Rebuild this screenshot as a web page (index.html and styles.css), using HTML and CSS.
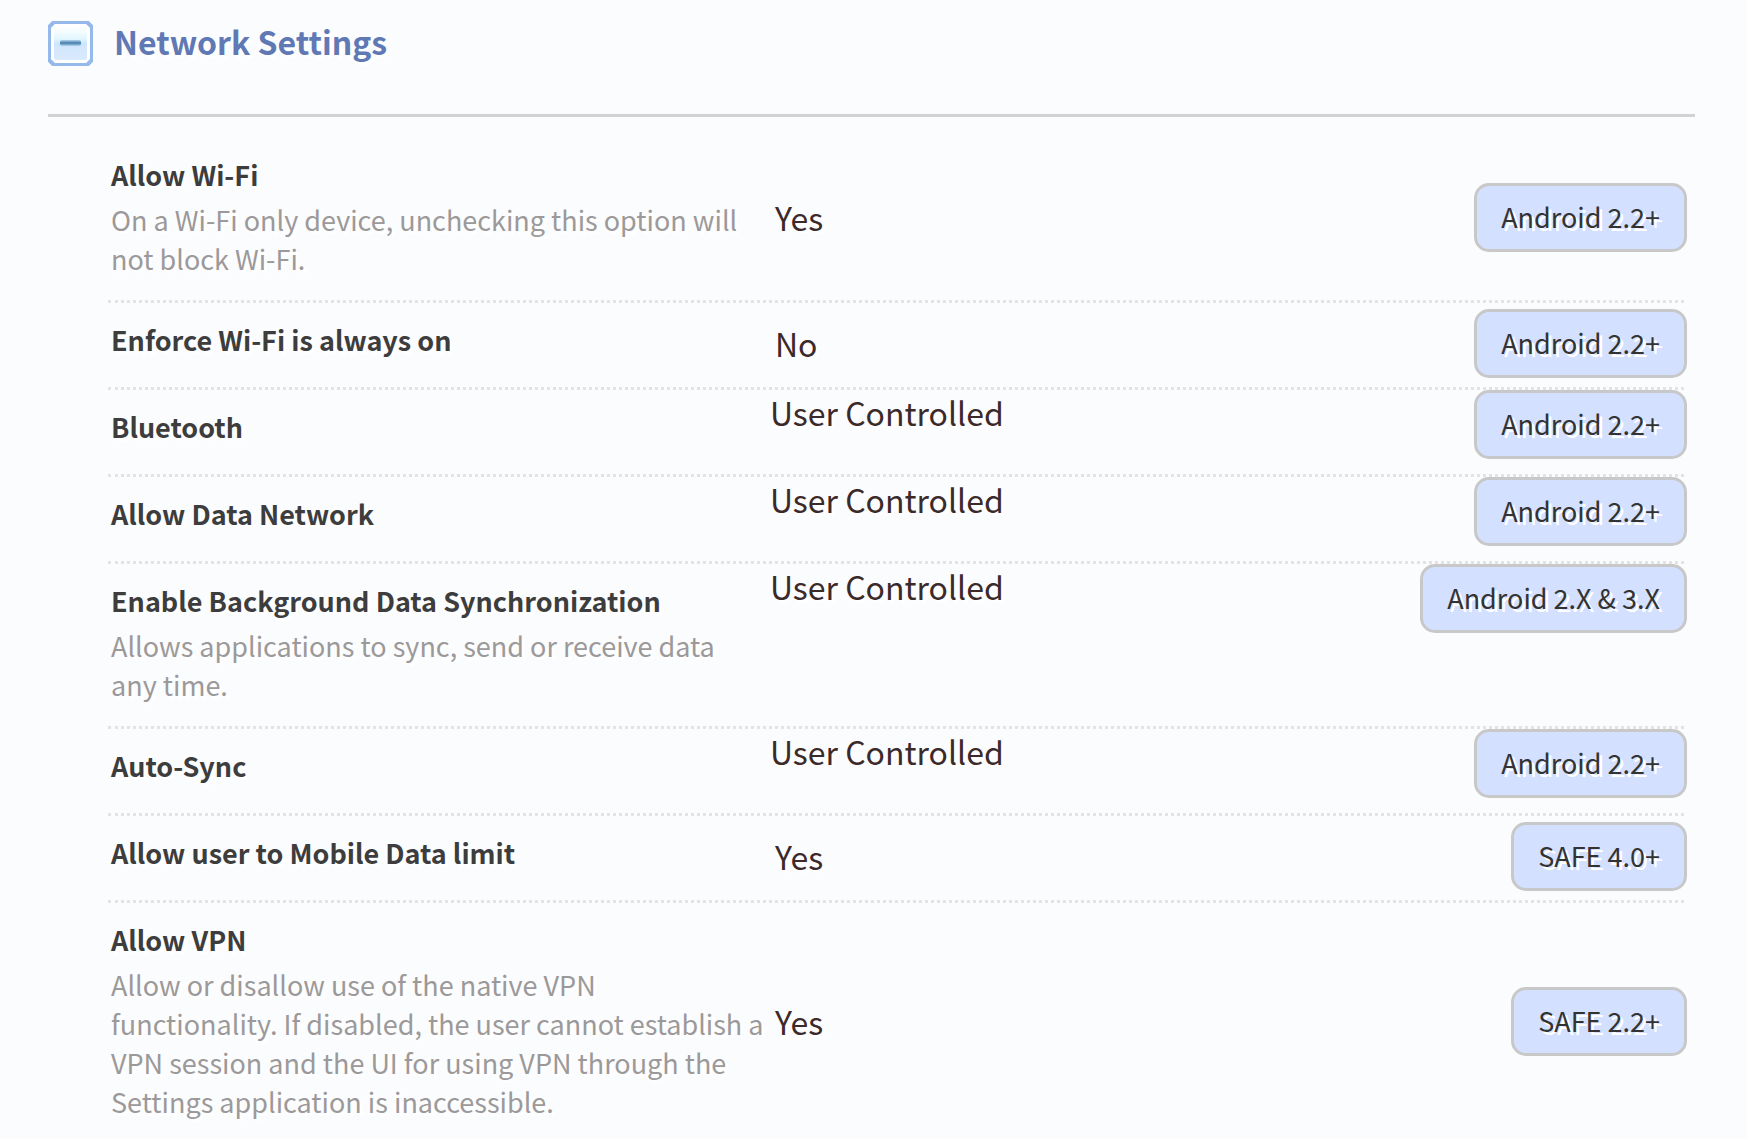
FILE: index.html
```html
<!DOCTYPE html>
<html lang="en">
<head>
<meta charset="utf-8">
<title>Network Settings</title>
<link rel="stylesheet" href="styles.css">
</head>
<body>
<section class="panel">
  <header class="panel-header">
    <button class="toggle" type="button" aria-label="Collapse Network Settings" aria-expanded="true">
      <svg viewBox="0 0 45 45" width="45" height="45" aria-hidden="true">
        <defs>
          <linearGradient id="face" x1="0" y1="0" x2="0" y2="1">
            <stop offset="0" stop-color="#fdfeff"/>
            <stop offset=".15" stop-color="#f4fcff"/>
            <stop offset=".35" stop-color="#e2f7ff"/>
            <stop offset=".5" stop-color="#cfe5fc"/>
            <stop offset="1" stop-color="#dbeafe"/>
          </linearGradient>
          <linearGradient id="bar" x1="0" y1="0" x2="0" y2="1">
            <stop offset="0" stop-color="#b4d6ef"/>
            <stop offset=".5" stop-color="#447cab"/>
            <stop offset="1" stop-color="#b4d6ef"/>
          </linearGradient>
          <filter id="soft" x="-10%" y="-10%" width="120%" height="120%">
            <feGaussianBlur stdDeviation=".7"/>
          </filter>
        </defs>
        <path d="M6 1H39L44 6V39L39 44H6L1 39V6Z" fill="#fff"/>
        <g filter="url(#soft)">
          <path d="M6 1H39L44 6V39L39 44H6L1 39V6Z" fill="none" stroke="#94b9ea" stroke-width="4"/>
          <rect x="6" y="6" width="33" height="33" rx="2" fill="url(#face)"/>
        </g>
        <rect x="12" y="19" width="21" height="6" rx="2" fill="url(#bar)"/>
      </svg>
    </button>
    <h2 class="panel-title">Network Settings</h2>
  </header>
  <table class="settings">
    <tbody>
      <tr class="setting">
        <th class="name" scope="row">Allow Wi-Fi<p class="hint">On a Wi-Fi only device, unchecking this option will not block Wi-Fi.</p></th>
        <td class="value">Yes</td>
        <td class="support"><span class="badge">Android 2.2+</span></td>
      </tr>
      <tr class="setting">
        <th class="name" scope="row">Enforce Wi-Fi is always on</th>
        <td class="value">No</td>
        <td class="support"><span class="badge">Android 2.2+</span></td>
      </tr>
      <tr class="setting choice">
        <th class="name" scope="row">Bluetooth</th>
        <td class="value">User Controlled</td>
        <td class="support"><span class="badge">Android 2.2+</span></td>
      </tr>
      <tr class="setting choice">
        <th class="name" scope="row">Allow Data Network</th>
        <td class="value">User Controlled</td>
        <td class="support"><span class="badge">Android 2.2+</span></td>
      </tr>
      <tr class="setting choice">
        <th class="name" scope="row">Enable Background Data Synchronization<p class="hint">Allows applications to sync, send or receive data any time.</p></th>
        <td class="value">User Controlled</td>
        <td class="support"><span class="badge">Android 2.X &amp; 3.X</span></td>
      </tr>
      <tr class="setting choice">
        <th class="name" scope="row">Auto-Sync</th>
        <td class="value">User Controlled</td>
        <td class="support"><span class="badge">Android 2.2+</span></td>
      </tr>
      <tr class="setting">
        <th class="name" scope="row">Allow user to Mobile Data limit</th>
        <td class="value">Yes</td>
        <td class="support"><span class="badge">SAFE 4.0+</span></td>
      </tr>
      <tr class="setting">
        <th class="name" scope="row">Allow VPN<p class="hint">Allow or disallow use of the native VPN functionality. If disabled, the user cannot establish a VPN session and the UI for using VPN through the Settings application is inaccessible.</p></th>
        <td class="value">Yes</td>
        <td class="support"><span class="badge">SAFE 2.2+</span></td>
      </tr>
    </tbody>
  </table>
</section>
</body>
</html>
```
FILE: styles.css
```css
* {
  box-sizing: border-box;
}

body {
  margin: 0;
  background: #fbfcfe;
  color: #3c2a2a;
  font-family: "Noto Sans CJK SC", "Noto Sans", sans-serif;
  text-shadow: 3px 3px 0 #fff;
}

/* The panel scrolls on its own inside the window */
.panel {
  height: 100vh;
  padding: 0 52px 0 48px;
  overflow: hidden auto;
  scrollbar-width: none;
}

.panel-header {
  display: flex;
  align-items: flex-start;
  gap: 21px;
  height: 117px;
  padding-top: 21px;
  border-bottom: 3px solid #d2d2d2;
}

.toggle {
  display: block;
  width: 45px;
  height: 45px;
  padding: 0;
  border: 0;
  background: none;
}

.toggle svg {
  display: block;
}

.panel-title {
  margin: 0;
  color: #6079b5;
  font-size: 32px;
  font-weight: 700;
  line-height: 40px;
}

.settings {
  display: block;
  margin: 21px 11px 0 60px;
}

.settings tbody {
  display: block;
}

.setting {
  display: grid;
  grid-template-columns: 42% 1fr auto;
  align-items: center;
  border-bottom: 3px dotted #e3e3e3;
}

.name {
  padding: 17px 5px 28px 3px;
  color: #3d3d3d;
  font-size: 27px;
  font-weight: 700;
  line-height: 39px;
  text-align: left;
}

.hint {
  margin: 6px 0 -6px;
  color: #9b9999;
  font-weight: 400;
}

.value {
  padding: 0 0 4px 5px;
  font-size: 32px;
  line-height: 44px;
}

.support {
  margin-right: -3px;
  padding: 0 0 4px;
}

.badge {
  display: block;
  padding: 11px 24px 13px;
  border: 3px solid #c8c8c8;
  border-radius: 15px;
  background: #d3e0ff;
  color: #333;
  font-size: 27px;
  line-height: 39px;
}

.choice .value,
.choice .support {
  align-self: start;
  padding: 0;
}
```
